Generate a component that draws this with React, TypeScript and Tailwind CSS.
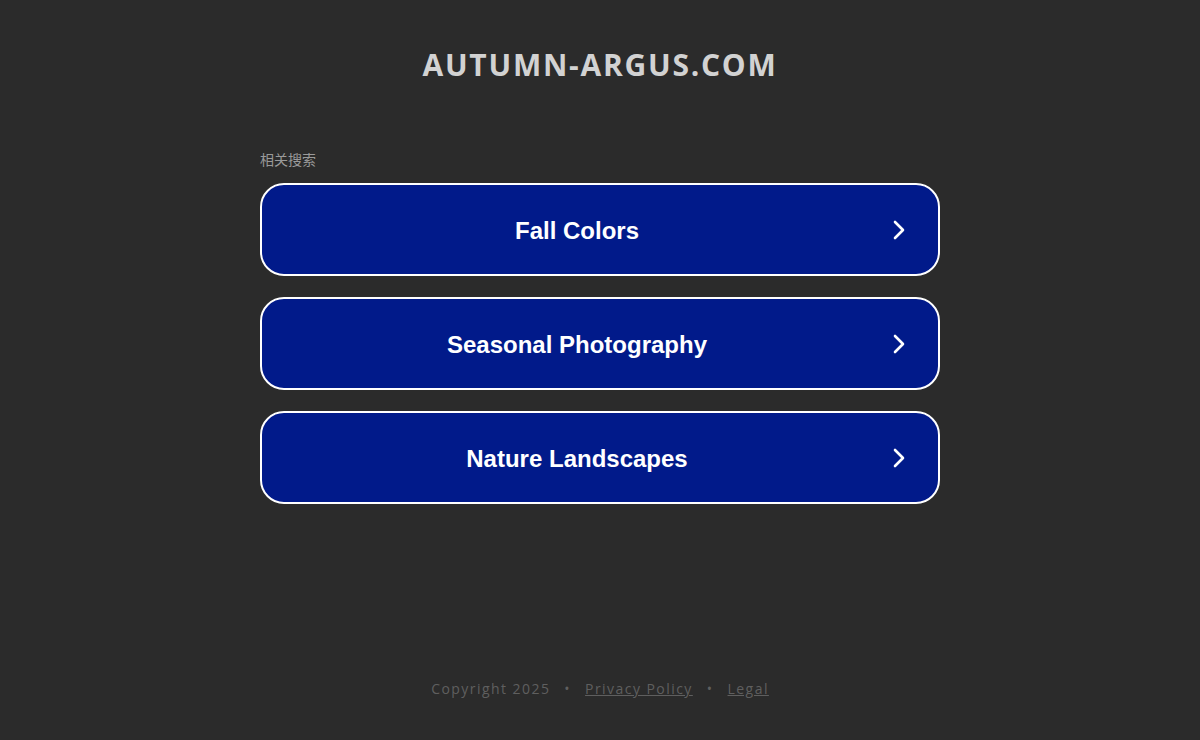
import React from 'react';

const links = ['Fall Colors', 'Seasonal Photography', 'Nature Landscapes'];

const Chevron: React.FC = () => (
  <svg className="w-[14px] h-[20px] shrink-0 mr-[32px]" viewBox="0 0 14 20" fill="none" stroke="white" strokeWidth="2.6" strokeLinecap="round" strokeLinejoin="round">
    <path d="M3 2l8 8-8 8" />
  </svg>
);

export default function App() {
  return (
    <div className="min-h-[740px] bg-[#2b2b2b] flex flex-col items-center" style={{ fontFamily: '"Open Sans", sans-serif' }}>
      <h1 className="mt-[43px] text-[30px] leading-[44px] font-bold tracking-[1.75px] text-[#d2d2d2]">AUTUMN-ARGUS.COM</h1>

      <div className="w-[680px] mt-[63px]">
        <div className="text-[14px] leading-[18px] text-[#9a9a9a] mb-[15px]" style={{ fontFamily: '"Noto Sans CJK SC", sans-serif' }}>相关搜索</div>
        <div className="flex flex-col gap-[21px]">
          {links.map(label => (
            <a key={label} href="#" className="h-[93px] flex items-center rounded-[24px] border-2 border-white bg-[#011a8a]">
              <span className="flex-1 text-center text-white text-[24px] leading-[30px] font-bold pt-[2px]" style={{ fontFamily: '"Liberation Sans", Arial, sans-serif' }}>{label}</span>
              <Chevron />
            </a>
          ))}
        </div>
      </div>

      <div className="mt-auto mb-[41px] text-[14px] leading-[20px] tracking-[1.45px] text-[#5f5f5f] flex items-center gap-[14px]">
        <span>Copyright 2025</span>
        <span>•</span>
        <a href="#" className="underline">Privacy Policy</a>
        <span>•</span>
        <a href="#" className="underline">Legal</a>
      </div>
    </div>
  );
}
